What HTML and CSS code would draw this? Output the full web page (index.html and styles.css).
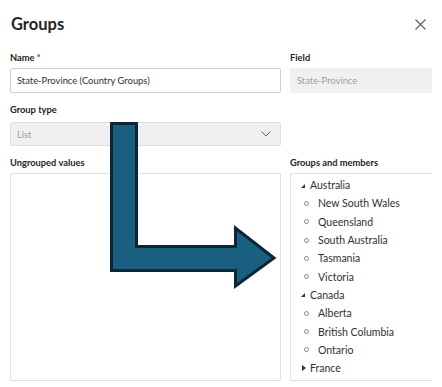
FILE: index.html
```html
<!DOCTYPE html>
<html lang="en">
<head>
<meta charset="utf-8">
<title>Groups</title>
<link rel="stylesheet" href="styles.css">
</head>
<body>
<div class="dialog">
  <header class="header">
    <h1 class="title">Groups</h1>
    <button class="close" aria-label="Close">
      <svg width="11" height="11" viewBox="0 0 11 11"><path d="M0.5 0.5 L10.5 10.5 M10.5 0.5 L0.5 10.5" stroke="#605e5c" stroke-width="1.1" fill="none"/></svg>
    </button>
  </header>

  <div class="grid">
    <div class="field">
      <div class="label">Name <span class="req">*</span></div>
      <div class="input">State-Province (Country Groups)</div>
    </div>
    <div class="field">
      <div class="label">Field</div>
      <div class="input disabled open-right">State-Province</div>
    </div>

    <div class="field type-field">
      <div class="label">Group type</div>
      <div class="select">
        <span>List</span>
        <svg width="10" height="6" viewBox="0 0 10 6"><path d="M0.5 0.5 L5 5 L9.5 0.5" stroke="#605e5c" stroke-width="1" fill="none"/></svg>
      </div>
    </div>
    <div></div>

    <div class="field list-field">
      <div class="label">Ungrouped values</div>
      <div class="box"></div>
    </div>
    <div class="field list-field">
      <div class="label">Groups and members</div>
      <div class="box open-right tree">
        <div class="row group"><span class="tri-down"></span>Australia</div>
        <div class="row leaf"><span class="dot"></span>New South Wales</div>
        <div class="row leaf"><span class="dot"></span>Queensland</div>
        <div class="row leaf"><span class="dot"></span>South Australia</div>
        <div class="row leaf"><span class="dot"></span>Tasmania</div>
        <div class="row leaf"><span class="dot"></span>Victoria</div>
        <div class="row group"><span class="tri-down"></span>Canada</div>
        <div class="row leaf"><span class="dot"></span>Alberta</div>
        <div class="row leaf"><span class="dot"></span>British Columbia</div>
        <div class="row leaf"><span class="dot"></span>Ontario</div>
        <div class="row group"><span class="tri-right"></span>France</div>
      </div>
    </div>
  </div>

  <svg class="arrow" width="442" height="387" viewBox="0 0 442 387">
    <polygon points="111.5,123.5 136.5,123.5 136.5,246.5 235.5,246.5 235.5,228 274,258 235.5,286 235.5,270.5 111.5,270.5" fill="#185f80" stroke="#0c2635" stroke-width="3" stroke-linejoin="miter"/>
  </svg>
</div>
</body>
</html>
```

FILE: styles.css
```css
* { box-sizing: border-box; }
html, body { margin: 0; padding: 0; background: #ffffff; }
body {
  font-family: Lato, "Open Sans", sans-serif;
  color: #323130;
  width: 442px;
  height: 387px;
  overflow: hidden;
}
.dialog {
  position: relative;
  width: 442px;
  height: 387px;
  padding: 0 10px 0 10px;
}
.header {
  display: flex;
  align-items: center;
  justify-content: space-between;
  height: 50px;
  padding: 0 0 2px 1px;
}
.title {
  margin: 0;
  font-size: 16.5px;
  font-weight: 700;
  color: #252423;
}
.close {
  border: 0;
  background: none;
  padding: 0;
  margin-right: 6px;
  width: 11px;
  height: 11px;
  display: flex;
}
.grid {
  display: grid;
  grid-template-columns: 271px 142px;
  column-gap: 9px;
}
.field { display: flex; flex-direction: column; }
.label {
  font-size: 9.3px;
  font-weight: 700;
  color: #252423;
  line-height: 16px;
  height: 16px;
  margin-bottom: 2px;
}
.req { color: #a4262c; }
.input {
  height: 25px;
  border: 1px solid #d2d0ce;
  border-radius: 2px;
  padding: 0 6px;
  font-size: 9.4px;
  line-height: 23px;
  color: #323130;
}
.input.disabled {
  background: #f0f0f0;
  border-color: #f0f0f0;
  color: #a19f9d;
}
.open-right {
  border-right: 0 !important;
  border-top-right-radius: 0 !important;
  border-bottom-right-radius: 0 !important;
}
.type-field { margin-top: 9px; }
.type-field .label { margin-bottom: 4px; }
.select {
  height: 24px;
  background: #f0f0f0;
  border: 1px solid #e1dfdd;
  border-radius: 2px;
  padding: 0 9px 0 6px;
  display: flex;
  align-items: center;
  justify-content: space-between;
  font-size: 9.4px;
  color: #a19f9d;
}
.list-field { margin-top: 9px; }
.box {
  height: 208px;
  border: 1px solid #e1dfdd;
  border-radius: 2px;
}
.tree { padding-top: 2px; }
.row {
  height: 18.3px;
  display: flex;
  align-items: center;
  font-size: 10.5px;
  color: #323130;
  white-space: nowrap;
}
.group { padding-left: 10px; }
.leaf { padding-left: 13px; }
.tri-down {
  width: 0; height: 0;
  border-left: 4px solid transparent;
  border-bottom: 4px solid #323130;
  margin-right: 5px;
  margin-top: 1px;
}
.tri-right {
  width: 0; height: 0;
  border-top: 3px solid transparent;
  border-bottom: 3px solid transparent;
  border-left: 4px solid #323130;
  margin-right: 4px;
  margin-left: 1px;
}
.dot {
  width: 5px; height: 5px;
  border: 1px solid #8a8886;
  border-radius: 50%;
  margin-right: 9px;
}
.arrow {
  position: absolute;
  left: 0;
  top: 0;
  pointer-events: none;
}
```
